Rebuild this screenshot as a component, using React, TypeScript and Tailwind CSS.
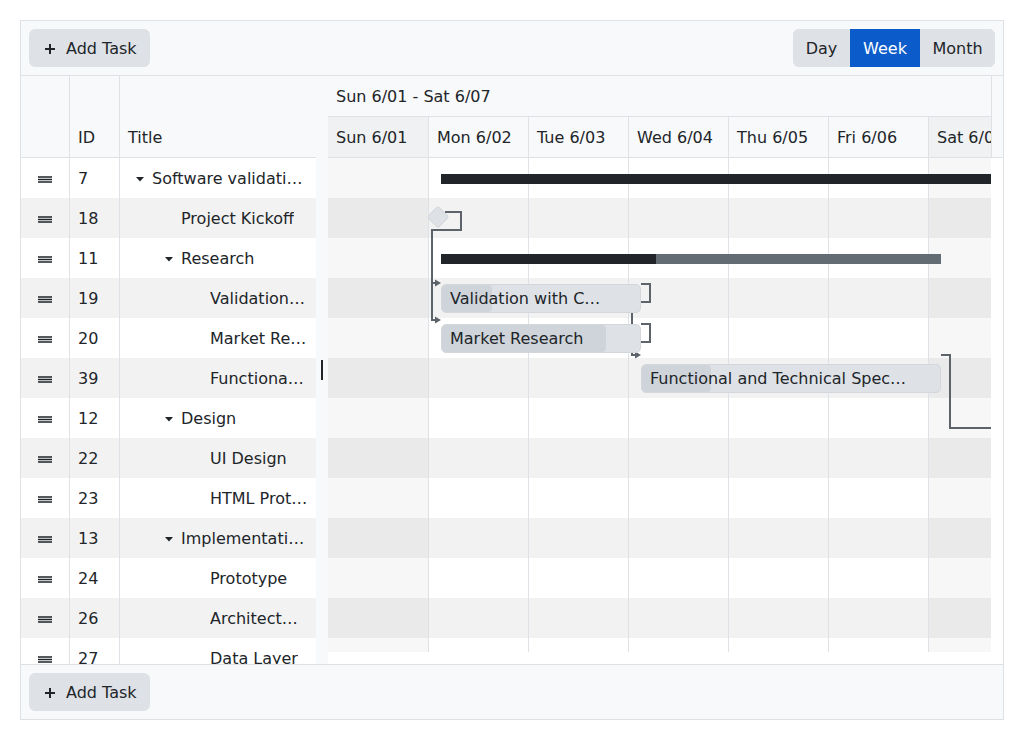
import React from "react";

type Row = { id: number; title: string; level: number; parent?: boolean };

const rows: Row[] = [
  { id: 7, title: "Software validation, research and implementation", level: 0, parent: true },
  { id: 18, title: "Project Kickoff", level: 1 },
  { id: 11, title: "Research", level: 1, parent: true },
  { id: 19, title: "Validation with Customers", level: 2 },
  { id: 20, title: "Market Research", level: 2 },
  { id: 39, title: "Functional and Technical Specification", level: 2 },
  { id: 12, title: "Design", level: 1, parent: true },
  { id: 22, title: "UI Design", level: 2 },
  { id: 23, title: "HTML Prototype", level: 2 },
  { id: 13, title: "Implementation", level: 1, parent: true },
  { id: 24, title: "Prototype", level: 2 },
  { id: 26, title: "Architect…", level: 2 },
  { id: 27, title: "Data Layer", level: 2 },
];

const indent = ["pl-0", "pl-[29px]", "pl-[58px]"];

const days = ["Sun 6/01", "Mon 6/02", "Tue 6/03", "Wed 6/04", "Thu 6/05", "Fri 6/06", "Sat 6/07"];

function Plus() {
  return (
    <span className="flex h-4 w-4 items-center justify-center">
      <svg width="10" height="10" viewBox="0 0 10 10">
        <rect x="4" y="0" width="2" height="10" fill="#212529" />
        <rect x="0" y="4" width="10" height="2" fill="#212529" />
      </svg>
    </span>
  );
}

function AddTask() {
  return (
    <button className="flex h-[38px] items-center gap-2 rounded-md border border-[#dee2e6] bg-[#dee2e6] px-3 pt-[2px] text-base leading-6 text-[#212529]">
      <Plus />
      <span>Add Task</span>
    </button>
  );
}

function Handle() {
  return (
    <svg width="14" height="7" viewBox="0 0 14 7">
      <rect x="0" y="0.25" width="14" height="1.5" fill="#212529" />
      <rect x="0" y="2.75" width="14" height="1.5" fill="#212529" />
      <rect x="0" y="5.25" width="14" height="1.5" fill="#212529" />
    </svg>
  );
}

function Caret() {
  return (
    <svg width="8" height="5" viewBox="0 0 8 5">
      <polygon points="0,0 8,0 4,4.5" fill="#212529" />
    </svg>
  );
}

export default function App() {
  return (
    <div className="h-[740px] w-[1024px] bg-white p-5 font-['DejaVu_Sans',sans-serif] text-base leading-6 text-[#212529]">
      <div className="flex h-[700px] w-[984px] flex-col border border-[#dee2e6] bg-[#f8f9fa]">
        {/* Toolbar */}
        <div className="flex h-[55px] shrink-0 items-center justify-between border-b border-[#dee2e6] px-2">
          <AddTask />
          <div className="flex overflow-hidden rounded-md bg-[#dee2e6]">
            <button className="flex h-[38px] w-[57px] items-center justify-center border border-[#dee2e6] pt-[2px] leading-6">Day</button>
            <button className="flex h-[38px] w-[70px] items-center justify-center border border-[#0b5cca] bg-[#0b5cca] pt-[2px] leading-6 text-white">Week</button>
            <button className="flex h-[38px] w-[75px] items-center justify-center border border-[#dee2e6] pt-[2px] leading-6">Month</button>
          </div>
        </div>

        {/* Main */}
        <div className="flex h-[588px] shrink-0">
          {/* Tree grid */}
          <div className="flex w-[295px] shrink-0 flex-col">
            <div className="flex h-[82px] shrink-0 border-b border-[#dee2e6]">
              <div className="w-[49px] shrink-0 border-r border-[#dee2e6]" />
              <div className="flex w-[50px] shrink-0 items-end border-r border-[#dee2e6]">
                <div className="flex h-[40px] items-center pl-2 pt-[2px]">ID</div>
              </div>
              <div className="flex flex-1 items-end">
                <div className="flex h-[40px] items-center pl-2 pt-[2px]">Title</div>
              </div>
            </div>
            <div className="flex-1 overflow-hidden bg-white">
              {rows.map((r, i) => (
                <div key={r.id} className={`flex h-[40px] ${i % 2 === 1 ? "bg-[#f2f2f2]" : "bg-white"}`}>
                  <div className="flex w-[49px] shrink-0 items-center justify-center border-r border-[#dee2e6] pt-[2px]">
                    <Handle />
                  </div>
                  <div className="flex w-[50px] shrink-0 items-center border-r border-[#dee2e6] pl-2 pt-[2px]">{r.id}</div>
                  <div className="flex min-w-0 flex-1 items-center pl-2 pr-2 pt-[2px]">
                    <div className={`flex min-w-0 items-center ${indent[r.level]}`}>
                      <span className="flex w-6 shrink-0 items-center justify-center">{r.parent ? <Caret /> : null}</span>
                      <span className="truncate">{r.title}</span>
                    </div>
                  </div>
                </div>
              ))}
            </div>
          </div>

          {/* Splitter */}
          <div className="flex w-[12px] shrink-0 items-center justify-center bg-[#f8f9fa]">
            <div className="h-[20px] w-[2px] bg-[#212529]" />
          </div>

          {/* Gantt */}
          <div className="flex w-[675px] shrink-0 flex-col">
            <div className="flex h-[82px] shrink-0 border-b border-[#dee2e6]">
              <div className="flex w-[664px] shrink-0 flex-col overflow-hidden border-r border-[#dee2e6]">
                <div className="flex h-[41px] shrink-0 items-center border-b border-[#dee2e6] pl-2 pt-[2px]">Sun 6/01 - Sat 6/07</div>
                <div className="flex h-[40px] shrink-0">
                  {days.map((d, i) => (
                    <div
                      key={d}
                      className={`flex shrink-0 items-center whitespace-nowrap border-r border-[#dee2e6] pl-2 pt-[2px] ${i === 0 ? "w-[101px]" : "w-[100px]"} ${i === 0 || i === 6 ? "bg-black/[0.03]" : ""}`}
                    >
                      {d}
                    </div>
                  ))}
                </div>
              </div>
              <div className="flex-1" />
            </div>
            <div className="flex-1 bg-white">
              <div className="relative h-[494px] w-[663px] overflow-hidden">
                {rows.map((r, i) => (
                  <div key={r.id} className={`flex h-[40px] ${i % 2 === 1 ? "bg-[#f2f2f2]" : "bg-white"}`}>
                    {days.map((d, j) => (
                      <div
                        key={d}
                        className={`h-full shrink-0 border-r border-[#dee2e6] ${j === 0 ? "w-[101px]" : "w-[100px]"} ${j === 0 || j === 6 ? "bg-black/[0.03]" : ""}`}
                      />
                    ))}
                  </div>
                ))}

                {/* Dependency lines */}
                <svg className="absolute left-0 top-0" width="700" height="520" viewBox="0 0 700 520">
                  <g stroke="#5c636a" strokeWidth="2" fill="none" shapeRendering="crispEdges">
                    <path d="M117 54 H133 V72 H104 V162 H109" />
                    <path d="M104 125 H109" />
                    <path d="M313 126 H322 V144 H304 V197 H309" />
                    <path d="M313 166 H322 V184 H304" />
                    <path d="M613 197 H622 V270 H700" />
                  </g>
                  <g fill="#5c636a">
                    <polygon points="107,121.5 113,125 107,128.5" />
                    <polygon points="107,158.5 113,162 107,165.5" />
                    <polygon points="307,193.5 313,197 307,200.5" />
                  </g>
                </svg>

                {/* Summary: Software validation */}
                <div className="absolute left-[113px] top-[16px] h-[10px] w-[600px] bg-[#212529]" />
                {/* Milestone */}
                <div className="absolute left-[102px] top-[51px] h-[16px] w-[16px] rotate-45 rounded-[2px] border border-[#d3d7dc] bg-[#dee2e6]" />
                {/* Summary: Research */}
                <div className="absolute left-[113px] top-[96px] flex h-[10px] w-[500px] bg-[#636b73]">
                  <div className="h-full w-[215px] bg-[#212529]" />
                </div>
                {/* Validation */}
                <div className="absolute left-[113px] top-[126px] h-[29px] w-[200px] overflow-hidden rounded-[5px] border border-[#d3d7dc] bg-[#dee2e6]">
                  <div className="absolute inset-y-0 left-0 w-[50px] rounded-[4px] bg-[#ced4da]" />
                  <div className="relative truncate pl-[8px] pr-[32px] leading-[27px]">Validation with Customers</div>
                </div>
                {/* Market Research */}
                <div className="absolute left-[113px] top-[166px] h-[29px] w-[200px] overflow-hidden rounded-[5px] border border-[#d3d7dc] bg-[#dee2e6]">
                  <div className="absolute inset-y-0 left-0 w-[164px] rounded-[4px] bg-[#ced4da]" />
                  <div className="relative truncate pl-[8px] pr-[32px] leading-[27px]">Market Research</div>
                </div>
                {/* Functional */}
                <div className="absolute left-[313px] top-[206px] h-[29px] w-[300px] overflow-hidden rounded-[5px] border border-[#d3d7dc] bg-[#dee2e6]">
                  <div className="absolute inset-y-0 left-0 w-[69px] rounded-[4px] bg-[#ced4da]" />
                  <div className="relative truncate pl-[8px] pr-[32px] leading-[27px]">Functional and Technical Specification</div>
                </div>
              </div>
            </div>
          </div>
        </div>

        {/* Footer */}
        <div className="flex h-[55px] shrink-0 items-center border-t border-[#dee2e6] px-2">
          <AddTask />
        </div>
      </div>
    </div>
  );
}
